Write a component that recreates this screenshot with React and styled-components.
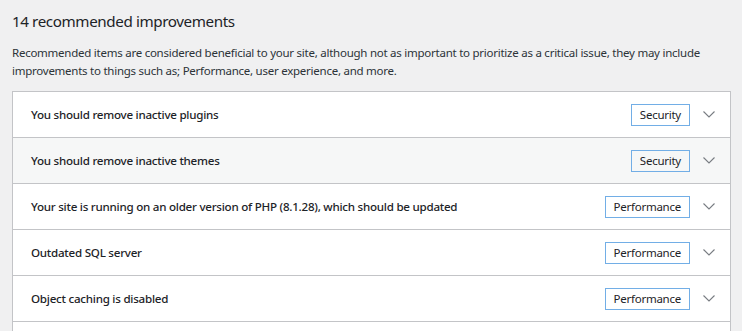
import React from 'react';
import styled, { createGlobalStyle } from 'styled-components';

const GlobalStyle = createGlobalStyle`
  html, body {
    margin: 0;
    background: #f0f0f1;
  }
  body {
    font-family: "Noto Sans", "Open Sans", sans-serif;
    color: #1d2327;
  }
`;

const items = [
  { title: 'You should remove inactive plugins', badge: 'Security' },
  { title: 'You should remove inactive themes', badge: 'Security', hover: true },
  { title: 'Your site is running on an older version of PHP (8.1.28), which should be updated', badge: 'Performance' },
  { title: 'Outdated SQL server', badge: 'Performance' },
  { title: 'Object caching is disabled', badge: 'Performance' },
  { title: 'Page cache is not detected', badge: 'Performance' },
];

const Chevron = () => (
  <svg width="12" height="7" viewBox="0 0 12 7" fill="none">
    <path d="M0.5 0.5 L6 6 L11.5 0.5" stroke="#787c82" strokeWidth="1.1" />
  </svg>
);

const App = () => (
  <Page>
    <GlobalStyle />
    <Heading>14 recommended improvements</Heading>
    <Intro>
      Recommended items are considered beneficial to your site, although not as important to prioritize as a critical issue, they may include improvements to things such as; Performance, user experience, and more.
    </Intro>
    <List>
      {items.map((item) => (
        <Row key={item.title} $hover={item.hover}>
          <Title>{item.title}</Title>
          <Badge>{item.badge}</Badge>
          <Toggle>
            <Chevron />
          </Toggle>
        </Row>
      ))}
    </List>
  </Page>
);

const Page = styled.div`
  padding: 10px 11px 0 12px;
  height: 331px;
  box-sizing: border-box;
  overflow: hidden;
`;

const Heading = styled.h3`
  margin: 0;
  font-size: 15.2px;
  font-weight: 400;
  line-height: 22px;
  letter-spacing: -0.4px;
`;

const Intro = styled.p`
  margin: 12px 0 0;
  font-size: 11.5px;
  line-height: 18px;
  letter-spacing: -0.25px;
  color: #2c3338;
`;

const List = styled.div`
  margin-top: 11px;
  border: 1px solid #c3c4c7;
  border-bottom: 0;
  background: #fff;
`;

const Row = styled.div`
  display: flex;
  align-items: center;
  height: 45px;
  padding: 0 15px 0 18px;
  border-bottom: 1px solid #c3c4c7;
  background: ${(p) => (p.$hover ? '#f6f7f7' : '#fff')};
`;

const Title = styled.div`
  flex: 1;
  font-size: 11.6px;
  font-weight: 500;
  letter-spacing: -0.25px;
  color: #1d2327;
`;

const Badge = styled.span`
  box-sizing: border-box;
  height: 22px;
  padding: 0 8px;
  display: flex;
  align-items: center;
  border: 1px solid #72aee6;
  font-size: 11.5px;
  letter-spacing: -0.25px;
  color: #1d2327;
`;

const Toggle = styled.span`
  display: flex;
  margin-left: 13px;
`;

export default App;
